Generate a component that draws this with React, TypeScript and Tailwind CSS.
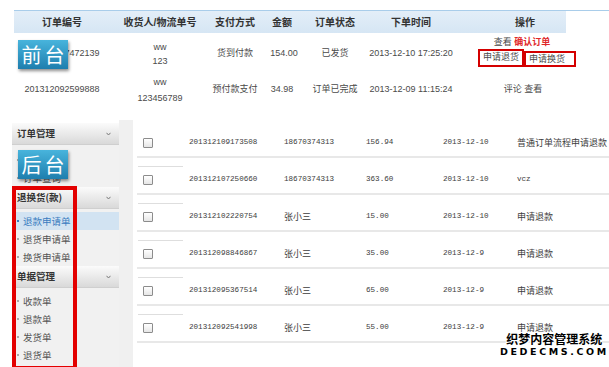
import React from "react";

const cjk = "font-['Liberation_Sans','Noto_Sans_CJK_SC',sans-serif]";
const mono = "font-['Liberation_Mono','Noto_Sans_CJK_SC',monospace]";

const cols = "grid grid-cols-[96px_100px_50px_44px_62px_90px_138px]";

function TopTable() {
  return (
    <div className={`ml-[14px] pt-[10px] ${cjk} text-[9px] text-[#4a4a4a]`}>
      <div
        className={`${cols} h-[23px] items-center border-t border-[#a9cdea] bg-[linear-gradient(#e3eef8,#d6e6f4)] bg-[length:552px_100%] bg-no-repeat text-[10px] font-bold text-[#333]`}
      >
        <div className="text-center">订单编号</div>
        <div className="text-center">收货人/物流单号</div>
        <div className="text-center">支付方式</div>
        <div className="text-center">金额</div>
        <div className="text-center">订单状态</div>
        <div className="text-center">下单时间</div>
        <div className="text-center">操作</div>
      </div>
      <div className={`${cols} h-[41px] items-center`}>
        <div className="text-center">201312107472139</div>
        <div className="text-center leading-[14px]">
          <div>ww</div>
          <div>123</div>
        </div>
        <div className="text-center">货到付款</div>
        <div className="text-center pl-[4px]">154.00</div>
        <div className="text-center">已发货</div>
        <div className="text-center">2013-12-10 17:25:20</div>
        <div className="flex flex-col items-center leading-[14px] pr-[6px]">
          <div className="mt-[-6px]">
            查看 <span className="text-[#e0282a] font-bold">确认订单</span>
          </div>
          <div className="flex pl-[10px]">
            <span className="border-2 border-[#d40000] px-[3px] leading-[12px]">申请退货</span>
            <span className="border-2 border-[#d40000] px-[3px] pr-[9px] leading-[12px] mt-[2px]">申请换货</span>
          </div>
        </div>
      </div>
      <div className={`${cols} h-[32px] items-center`}>
        <div className="text-center">201312092599888</div>
        <div className="text-center leading-[16px]">
          <div>ww</div>
          <div>123456789</div>
        </div>
        <div className="text-center">预付款支付</div>
        <div className="text-center">34.98</div>
        <div className="text-center">订单已完成</div>
        <div className="text-center">2013-12-09 11:15:24</div>
        <div className="text-center pr-[4px]">评论 查看</div>
      </div>
    </div>
  );
}

function SideHeader({ title }: { title: string }) {
  return (
    <div className="h-[22px] flex items-center justify-between pl-[5px] pr-[8px] bg-[linear-gradient(#fbfbfb,#d9d9d9)] border-b border-[#cfcfcf] text-[9.5px] font-bold text-[#333]">
      <span>{title}</span>
      <svg width="5" height="4" viewBox="0 0 5 4">
        <path d="M0.5 0.8 L2.5 3 L4.5 0.8" fill="none" stroke="#777" strokeWidth="1" />
      </svg>
    </div>
  );
}

function SideItem({ label, active }: { label: string; active?: boolean }) {
  return (
    <div
      className={`h-[18px] flex items-center pl-[5px] text-[9.5px] ${
        active ? "bg-[#d2e3f2] text-[#3a7cc0]" : "text-[#555]"
      }`}
    >
      <span className={`w-[2px] h-[2px] mr-[4px] ${active ? "bg-[#3a7cc0]" : "bg-[#aaa]"}`} />
      {label}
    </div>
  );
}

const rows = [
  ["201312109173508", "18670374313", "156.94", "2013-12-10", "普通订单流程申请退款"],
  ["201312107250660", "18670374313", "363.60", "2013-12-10", "vcz"],
  ["201312102220754", "张小三", "15.00", "2013-12-10", "申请退款"],
  ["201312098846867", "张小三", "35.00", "2013-12-9", "申请退款"],
  ["201312095367514", "张小三", "65.00", "2013-12-9", "申请退款"],
  ["201312092541998", "张小三", "55.00", "2013-12-9", "申请退款"],
];

function isCjk(s: string) {
  return /[\u4e00-\u9fff]/.test(s);
}

function Cell({ text, className }: { text: string; className: string }) {
  return (
    <div className={`${className} ${isCjk(text) ? "text-[9px] font-['Noto_Sans_CJK_SC',sans-serif]" : `text-[7.6px] ${mono}`}`}>
      {text}
    </div>
  );
}

function ContentTable() {
  return (
    <div className="flex-1 bg-white pt-[14px] pl-[4px] text-[#3c3c3c]">
      {rows.map((r, i) => (
        <div key={i} className="h-[37px] flex flex-col">
          <div className={`h-px w-[45px] ml-[1px] ${i === 0 ? "" : "bg-[#dedede]"}`} />
          <div className="h-[26px] flex items-center">
            <div className="w-[52px] pl-[6px]">
              <div className="w-[10px] h-[10px] border border-[#8c8c8c] bg-[linear-gradient(#ffffff,#e6e6e6)] rounded-[1px]" />
            </div>
            <Cell text={r[0]} className="w-[95px]" />
            <Cell text={r[1]} className="w-[82px]" />
            <Cell text={r[2]} className="w-[77px]" />
            <Cell text={r[3]} className="w-[74px]" />
            <Cell text={r[4]} className="flex-1" />
          </div>
          <div className="h-[2px] bg-[#e8e8e8]" />
        </div>
      ))}
    </div>
  );
}

function Label({ text }: { text: string }) {
  return (
    <div className="w-[50px] h-[29px] flex items-center justify-center bg-[linear-gradient(#48b4dc,#1e7eae)] text-white text-[20px] leading-none tracking-[3px] pl-[3px] font-['Noto_Sans_CJK_SC',sans-serif] shadow-[1px_2px_3px_rgba(0,0,0,0.45)]">
      {text}
    </div>
  );
}

export default function App() {
  return (
    <div className={`relative w-[609px] h-[367px] overflow-hidden bg-white ${cjk}`}>
      <TopTable />
      <div className="flex mt-[9px] h-[252px]">
        <div className="w-[12px] bg-white" />
        <div className="w-[107px] mt-[8px] bg-[#f1f1f1] flex flex-col font-['Noto_Sans_CJK_SC',sans-serif]">
          <SideHeader title="订单管理" />
          <div className="h-[6px]" />
          <SideItem label="订单列表" />
          <SideItem label="订单查询" />
          <SideHeader title="退换货(款)" />
          <div className="h-[3px]" />
          <SideItem label="退款申请单" active />
          <SideItem label="退货申请单" />
          <SideItem label="换货申请单" />
          <SideHeader title="单据管理" />
          <div className="h-[4px]" />
          <SideItem label="收款单" />
          <SideItem label="退款单" />
          <SideItem label="发货单" />
          <SideItem label="退货单" />
        </div>
        <div className="w-[14px] mt-[5px] bg-[#f0f0f0]" />
        <ContentTable />
      </div>

      <div className="absolute left-[18px] top-[40px]">
        <Label text="前台" />
      </div>
      <div className="absolute left-[18px] top-[150px]">
        <Label text="后台" />
      </div>
      <div className="absolute left-[12px] top-[186px] w-[65px] h-[184px] border-4 border-[#e30000]" />

      <div className="absolute left-[500px] top-[333px] flex flex-col items-center font-['Noto_Sans_CJK_SC',sans-serif] text-black font-bold leading-none [text-shadow:1px_0_#fff,-1px_0_#fff,0_1px_#fff,0_-1px_#fff,1px_1px_#fff,-1px_-1px_#fff]">
        <div className="text-[12px] tracking-[0px]">织梦内容管理系统</div>
        <div className="text-[9.5px] tracking-[2.6px] mt-[2px] font-['DejaVu_Sans',sans-serif]">DEDECMS.COM</div>
      </div>
    </div>
  );
}
